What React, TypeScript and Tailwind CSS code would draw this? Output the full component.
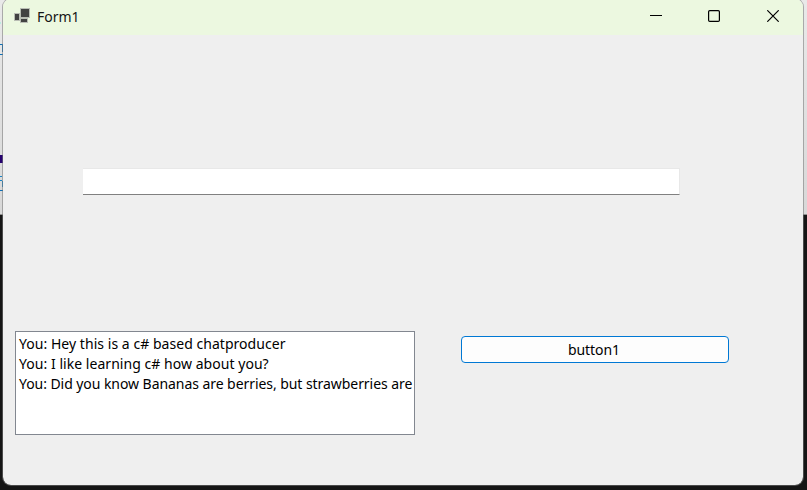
import React from 'react';

const messages = [
  { text: 'You: Hey this is a c# based chatproducer', spacing: 'tracking-[0.04px]' },
  { text: 'You: I like learning c# how about you?', spacing: 'tracking-[0.04px]' },
  { text: 'You: Did you know Bananas are berries, but strawberries are', spacing: 'tracking-[-0.06px]' },
];

function Backdrop() {
  return (
    <div className="flex h-full flex-col">
      <div className="relative h-[215px] overflow-hidden border-b border-[#8f8f8f] bg-gradient-to-b from-[#e9e9e9] to-[#d8d8d8]">
        <div className="absolute top-[22px] left-0 h-[2px] w-px bg-[#b9eee0]" />
        <div className="absolute top-[44px] left-0 h-[8px] w-[3px] border-t border-r border-[#0b6fb8]" />
        <div className="absolute top-[54px] left-0 h-px w-[3px] bg-[#0b6fb8]" />
        <div className="absolute top-[155px] left-0 h-[8px] w-[3px] bg-[#25006f]" />
        <div className="absolute top-[176px] left-0 h-px w-[2px] bg-[#1784c7]" />
        <div className="absolute top-[180px] left-0 h-px w-[2px] bg-[#1784c7]" />
        <div className="absolute top-[181px] left-[2px] h-[6px] w-px bg-[#1784c7]" />
        <div className="absolute top-[190px] left-0 h-px w-[3px] bg-[#0b6fb8]" />
      </div>
      <div className="flex-1 bg-[#151515]" />
    </div>
  );
}

function TitleBar() {
  return (
    <header className="flex h-9 shrink-0 items-center bg-[#ecf8e0] pb-px">
      <svg className="mb-px ml-[11px] h-4 w-4" viewBox="0 0 16 16" shapeRendering="crispEdges">
        <path d="M6 0h10v10H6zM0 5h6v8H0zM6 10h8v5H6z" fill="#b9bdb4" />
        <path d="M7 1h8v8H7zM1 6h4v6H1zM7 11h6v3H7z" fill="#424242" />
      </svg>
      <span className="ml-[7px] flex-1 text-[14px] leading-5 text-[#151515]">Form1</span>
      <div className="mr-[24px] mb-px flex items-center text-black">
        <svg className="mr-[46px] h-3 w-3" viewBox="0 0 12 12" fill="none" stroke="currentColor">
          <path d="M0 5.5h12" />
        </svg>
        <svg className="mr-[47px] h-3 w-3" viewBox="0 0 12 12" fill="none" stroke="currentColor" strokeWidth="1.2">
          <rect x=".6" y=".6" width="10.8" height="10.8" rx="1.2" />
        </svg>
        <svg className="h-3 w-3" viewBox="0 0 12 12" fill="none" stroke="currentColor" strokeWidth="1.2">
          <path d="M.3.3l11.4 11.4M11.7.3L.3 11.7" />
        </svg>
      </div>
    </header>
  );
}

export default function App() {
  return (
    <div className="relative h-[490px] w-[807px] overflow-hidden font-['Noto_Sans','Open_Sans',sans-serif] text-black">
      <Backdrop />
      <div className="absolute top-[-2px] left-[2px] flex h-[488px] w-[802px] flex-col overflow-hidden rounded-[9px] border border-[#7777778c] bg-[#efefef] bg-clip-padding">
        <TitleBar />
        <main className="flex flex-1 flex-col">
          <input
            aria-label="Message"
            className="mt-[133px] ml-[80px] h-[27px] w-[597px] shrink-0 border-t border-r border-b border-[#e8e8e8] border-b-[#808080] bg-white px-1 text-sm outline-none"
          />
          <div className="mt-[136px] ml-3 flex items-start">
            <ul className="h-[104px] w-[400px] overflow-hidden border border-[#828790] bg-white pt-[2px] pl-[3px]">
              {messages.map((message) => (
                <li key={message.text} className={`h-5 text-[14px] leading-5 whitespace-nowrap ${message.spacing}`}>
                  {message.text}
                </li>
              ))}
            </ul>
            <button className="mt-[5px] ml-[46px] h-[27px] w-[268px] rounded-[4px] border border-[#0078d4] bg-[#fdfdfd] pr-[2px] text-[14px] leading-5 tracking-[-0.05px]">
              button1
            </button>
          </div>
        </main>
      </div>
    </div>
  );
}
